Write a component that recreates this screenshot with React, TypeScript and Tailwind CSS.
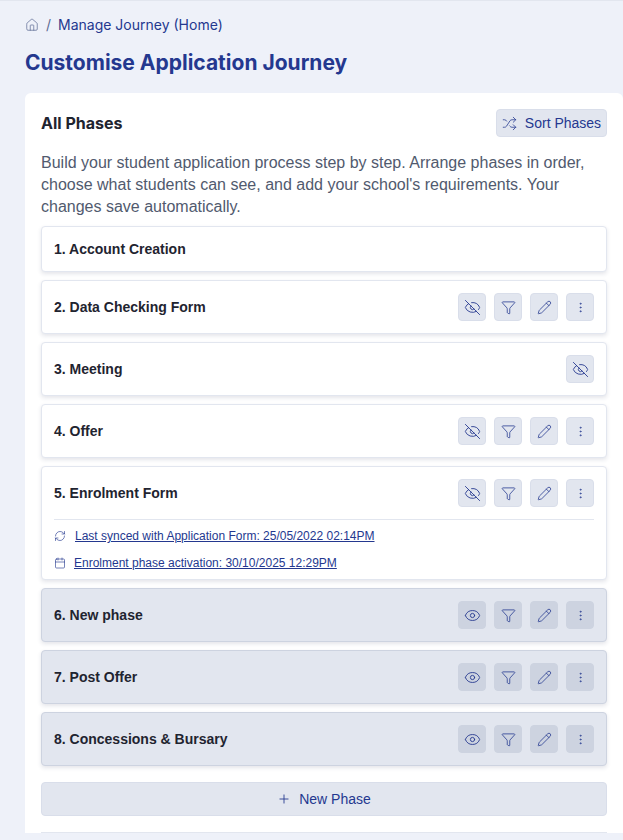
import React from 'react';
import { Home, Shuffle, EyeOff, Eye, Funnel, Pencil, EllipsisVertical, RefreshCw, Calendar, Plus } from 'lucide-react';

type Phase = {
  name: string;
  hidden?: boolean;
  locked?: boolean;
  noActions?: boolean;
  onlyEye?: boolean;
  dates?: boolean;
};

const phases: Phase[] = [
  { name: '1. Account Creation', noActions: true },
  { name: '2. Data Checking Form' },
  { name: '3. Meeting', onlyEye: true },
  { name: '4. Offer' },
  { name: '5. Enrolment Form', dates: true },
  { name: '6. New phase', hidden: true },
  { name: '7. Post Offer', hidden: true },
  { name: '8. Concessions & Bursary', hidden: true },
];

const IconButton = ({ hidden, children }: { hidden?: boolean; children: React.ReactNode }) => (
  <button
    type="button"
    className={`flex h-7 w-7 items-center justify-center rounded border text-[#24388f] ${
      hidden ? 'border-[#cdd3e0] bg-[#cdd3e0]' : 'border-[#d9deea] bg-[#e2e6ef]'
    }`}
  >
    {children}
  </button>
);

const PhaseRow = ({ phase }: { phase: Phase }) => {
  const { name, hidden, noActions, onlyEye, dates } = phase;
  return (
    <div
      className={`rounded border shadow-[0_2px_4px_rgba(30,41,80,0.12)] ${
        hidden ? 'border-[#cdd3e0] bg-[#e2e6ef]' : 'border-[#e2e6ef] bg-white'
      }`}
    >
      <div className={`flex items-center justify-between px-3 ${noActions ? 'h-11' : 'h-[52px]'}`}>
        <span className="text-sm font-bold text-[#1f2430]">{name}</span>
        {!noActions && (
          <div className="flex gap-2">
            <IconButton hidden={hidden}>
              {hidden ? <Eye size={17} strokeWidth={1.25} /> : <EyeOff size={17} strokeWidth={1.25} />}
            </IconButton>
            {!onlyEye && (
              <>
                <IconButton hidden={hidden}>
                  <Funnel size={15} strokeWidth={1.25} />
                </IconButton>
                <IconButton hidden={hidden}>
                  <Pencil size={15} strokeWidth={1.25} />
                </IconButton>
                <IconButton hidden={hidden}>
                  <EllipsisVertical size={13} strokeWidth={1.25} />
                </IconButton>
              </>
            )}
          </div>
        )}
      </div>
      {dates && (
        <div className="mx-3 mb-[7px] flex flex-col gap-[9px] border-t border-[#e2e6ef] pt-[7px] text-xs text-[#24388f]">
          <div className="flex h-[18px] items-center gap-[9px]">
            <RefreshCw size={12} strokeWidth={1.25} />
            <a className="underline" href="#">
              Last synced with Application Form: 25/05/2022 02:14PM
            </a>
          </div>
          <div className="flex h-[18px] items-center gap-2">
            <Calendar size={12} strokeWidth={1.25} />
            <a className="underline" href="#">
              Enrolment phase activation: 30/10/2025 12:29PM
            </a>
          </div>
        </div>
      )}
    </div>
  );
};

export default function App() {
  return (
    <div className="h-[840px] overflow-hidden border-t border-[#e2e6ef] bg-[#eef1f9] pt-[15px] pl-[25px] font-['Liberation_Sans',Arial,sans-serif]">
      <nav className="flex h-[17px] items-center gap-[7px] font-['Inter',sans-serif] text-sm text-[#24388f]">
        <Home size={14} strokeWidth={1.25} className="text-[#5d6a94]" />
        <span className="text-[#5d6a94]">/</span>
        <span>Manage Journey (Home)</span>
      </nav>
      <h1 className="mt-[15px] h-[30px] font-['Inter',sans-serif] text-[21px] leading-[30px] font-bold text-[#24388f]">
        Customise Application Journey
      </h1>
      <div className="mt-[15px] rounded-t-md bg-white px-4 pt-4">
        <div className="flex h-7 items-center justify-between">
          <h2 className="font-['Inter',sans-serif] text-base font-bold text-[#1f2430]">All Phases</h2>
          <button
            type="button"
            className="flex h-7 w-[111px] items-center justify-center gap-2 rounded border border-[#d9deea] bg-[#e2e6ef] text-sm text-[#24388f]"
          >
            <Shuffle size={15} strokeWidth={1.25} />
            Sort Phases
          </button>
        </div>
        <p className="mt-[15px] text-base leading-[22px] text-[#515a6e]">
          Build your student application process step by step. Arrange phases in order, choose what students can see, and add your school's requirements. Your changes save automatically.
        </p>
        <div className="mt-2 flex flex-col gap-2">
          {phases.map(phase => (
            <PhaseRow key={phase.name} phase={phase} />
          ))}
        </div>
        <button
          type="button"
          className="mt-4 flex h-[34px] w-full items-center justify-center gap-2 rounded border border-[#d9deea] bg-[#e2e6ef] text-sm text-[#24388f]"
        >
          <Plus size={14} strokeWidth={1.5} />
          New Phase
        </button>
        <div className="mt-4 border-t border-[#e2e6ef]" />
      </div>
    </div>
  );
}
